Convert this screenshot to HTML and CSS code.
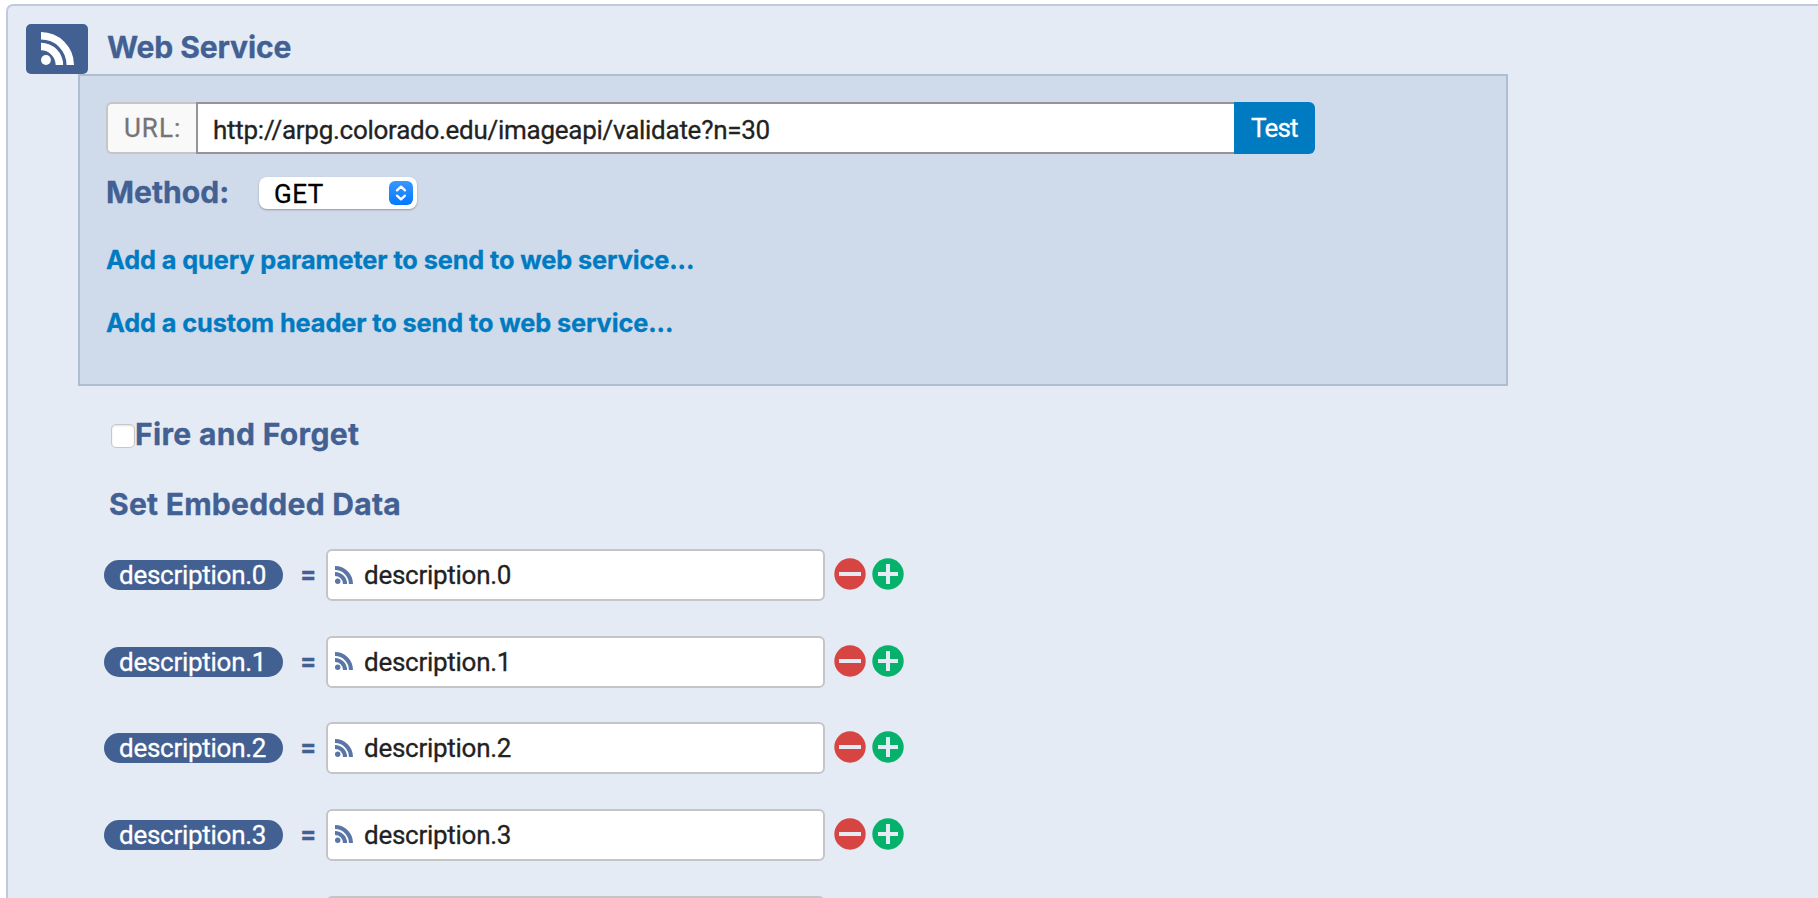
FILE: index.html
```html
<!DOCTYPE html>
<html lang="en">
<head>
<meta charset="utf-8">
<title>Web Service</title>
<link rel="stylesheet" href="styles.css">
</head>
<body>
<svg width="0" height="0" class="defs">
  <symbol id="feed" viewBox="0 0 32 32">
    <circle cx="4.8" cy="27.2" r="4.8"/>
    <path d="M0 10.5A21.5 21.5 0 0 1 21.5 32H14.2A14.2 14.2 0 0 0 0 17.8Z"/>
    <path d="M0 0A32 32 0 0 1 32 32H24.8A24.8 24.8 0 0 0 0 7.2Z"/>
  </symbol>
  <symbol id="minus" viewBox="0 0 32 32">
    <circle cx="16" cy="16" r="15.7" fill="#d64541"/>
    <path d="M5 16H27" stroke="#e5ebf5" stroke-width="4"/>
  </symbol>
  <symbol id="plus" viewBox="0 0 32 32">
    <circle cx="16" cy="16" r="15.7" fill="#06b26b"/>
    <path d="M6 16H26M16 6V26" stroke="#e5ebf5" stroke-width="4"/>
  </symbol>
</svg>
<main class="panel">
  <header class="head">
    <div class="badge"><svg class="badge-icon"><use href="#feed"/></svg></div>
    <h1 class="title">Web Service</h1>
  </header>
  <section class="service">
    <div class="url-row">
      <span class="addon">URL:</span>
      <div class="url-input">http://arpg.colorado.edu/imageapi/validate?n=30</div>
      <div class="test" role="button">Test</div>
    </div>
    <div class="method-row">
      <span class="label">Method:</span>
      <div class="select">
        <span class="select-value">GET</span>
        <svg class="select-arrow" viewBox="0 0 24 24"><path d="M8 9.4L12 5.6L16 9.4M8 14.6L12 18.4L16 14.6"/></svg>
      </div>
    </div>
    <a class="link">Add a query parameter to send to web service...</a>
    <a class="link">Add a custom header to send to web service...</a>
  </section>
  <div class="fire"><span class="checkbox"></span><span class="fire-label">Fire and Forget</span></div>
  <h2 class="subtitle">Set Embedded Data</h2>
  <div class="rows">
    <div class="row"><span class="pill">description.0</span><span class="eq">=</span><div class="field"><svg class="field-icon"><use href="#feed"/></svg>description.0</div><svg class="act"><use href="#minus"/></svg><svg class="act add"><use href="#plus"/></svg></div>
    <div class="row"><span class="pill">description.1</span><span class="eq">=</span><div class="field"><svg class="field-icon"><use href="#feed"/></svg>description.1</div><svg class="act"><use href="#minus"/></svg><svg class="act add"><use href="#plus"/></svg></div>
    <div class="row"><span class="pill">description.2</span><span class="eq">=</span><div class="field"><svg class="field-icon"><use href="#feed"/></svg>description.2</div><svg class="act"><use href="#minus"/></svg><svg class="act add"><use href="#plus"/></svg></div>
    <div class="row"><span class="pill">description.3</span><span class="eq">=</span><div class="field"><svg class="field-icon"><use href="#feed"/></svg>description.3</div><svg class="act"><use href="#minus"/></svg><svg class="act add"><use href="#plus"/></svg></div>
    <div class="row partial"><div class="field"></div></div>
  </div>
</main>
</body>
</html>
```
FILE: styles.css
```css
* { box-sizing: border-box; }
body {
  margin: 0;
  height: 898px;
  overflow: hidden;
  background: #fff;
  padding: 4px 0 0 6px;
  font: 26px/32px Roboto, sans-serif;
  letter-spacing: -0.27px;
  -webkit-text-stroke: 0.3px;
  color: #222;
}
.defs { position: absolute; }
.panel {
  height: 894px;
  overflow: hidden;
  border: 2px solid #bfcadd;
  border-width: 2px 0 0 2px;
  border-radius: 7px 0 0 0;
  background: #e5ebf5;
  padding: 18px 0 0 18px;
}
.head { display: flex; align-items: flex-start; height: 50px; }
.badge {
  width: 62px;
  height: 50px;
  border-radius: 5px;
  background: #426092;
  padding: 8px 0 0 15px;
}
.badge-icon { display: block; width: 33px; height: 33px; fill: #fff; }
.title, .label, .fire-label, .subtitle {
  margin: 0;
  font: bold 30.1px/46px Inter, sans-serif;
  color: #426092;
}
.title { margin-left: 19px; letter-spacing: -0.15px; }
.service {
  width: 1430px;
  height: 312px;
  margin-left: 52px;
  border: 2px solid #aebdd2;
  background: #cfdaea;
  padding: 26px;
}
.url-row { display: flex; height: 52px; width: 1209px; line-height: 49px; }
.addon {
  width: 90px;
  border: 2px solid #c6c6c8;
  border-right: 0;
  border-radius: 6px 0 0 6px;
  background: #f9f9f9;
  color: #757575;
  padding-left: 16px;
  letter-spacing: 1px;
}
.url-input {
  flex: 1;
  border: 2px solid #949398;
  border-right: 0;
  background: #fff;
  padding: 3px 0 0 15px;
  line-height: 46px;
}
.test {
  width: 81px;
  border-radius: 0 6px 6px 0;
  background: #007ac0;
  color: #fff;
  padding-left: 17px;
  line-height: 52px;
  letter-spacing: -0.8px;
}
.method-row { display: flex; margin-top: 15px; height: 46px; }
.label { width: 152px; letter-spacing: 0; }
.select {
  display: flex;
  justify-content: space-between;
  align-items: center;
  width: 158px;
  height: 32px;
  margin: 8px 0 0 1px;
  border-radius: 8px;
  background: #fff;
  box-shadow: 0 1px 2px rgba(0, 0, 0, .3);
  padding: 0 4px 0 15px;
  color: #000;
}
.select-value { letter-spacing: 0.5px; padding-top: 2px; }
.select-arrow {
  width: 24px;
  height: 24px;
  border-radius: 6px;
  background: linear-gradient(#3a97ff, #007aff);
  fill: none;
  stroke: #fff;
  stroke-width: 2.3;
  stroke-linecap: round;
  stroke-linejoin: round;
}
.link {
  display: block;
  margin: 29px 0 0;
  font: bold 25.3px/32px Inter, sans-serif;
  letter-spacing: -0.1px;
  color: #007ac0;
}
.link + .link { margin-top: 31px; }
.fire { display: flex; margin: 25px 0 0 85px; }
.checkbox {
  width: 24px;
  height: 24px;
  margin-top: 13px;
  border: 1px solid #c6c7ca;
  border-radius: 5px;
  background: #fff;
  box-shadow: inset 0 1px 2px rgba(0, 0, 0, .12);
}
.fire-label { letter-spacing: 0.33px; }
.subtitle { margin: 24px 0 0 83px; letter-spacing: 0.22px; }
.rows { display: grid; row-gap: 34.67px; margin: 22px 0 0 78px; }
.row { display: flex; align-items: center; height: 52px; }
.partial { padding-left: 222px; }
.pill {
  width: 179px;
  height: 30px;
  line-height: 30px;
  border-radius: 15px;
  background: #426092;
  color: #fff;
  padding-left: 15px;
}
.eq {
  width: 43px;
  text-align: center;
  padding-left: 7px;
  font: bold 27px/30px Roboto, sans-serif;
  color: #426092;
}
.field {
  display: flex;
  align-items: center;
  width: 499px;
  height: 52px;
  border: 2px solid #c5c5c7;
  border-radius: 6px;
  background: #fff;
  padding-left: 8px;
}
.field-icon { width: 18px; height: 18px; margin: -1px 11px 0 -1px; fill: #5a76a6; }
.act { width: 32px; height: 32px; margin: -2px 0 0 9px; }
.add { margin-left: 6px; }
```
